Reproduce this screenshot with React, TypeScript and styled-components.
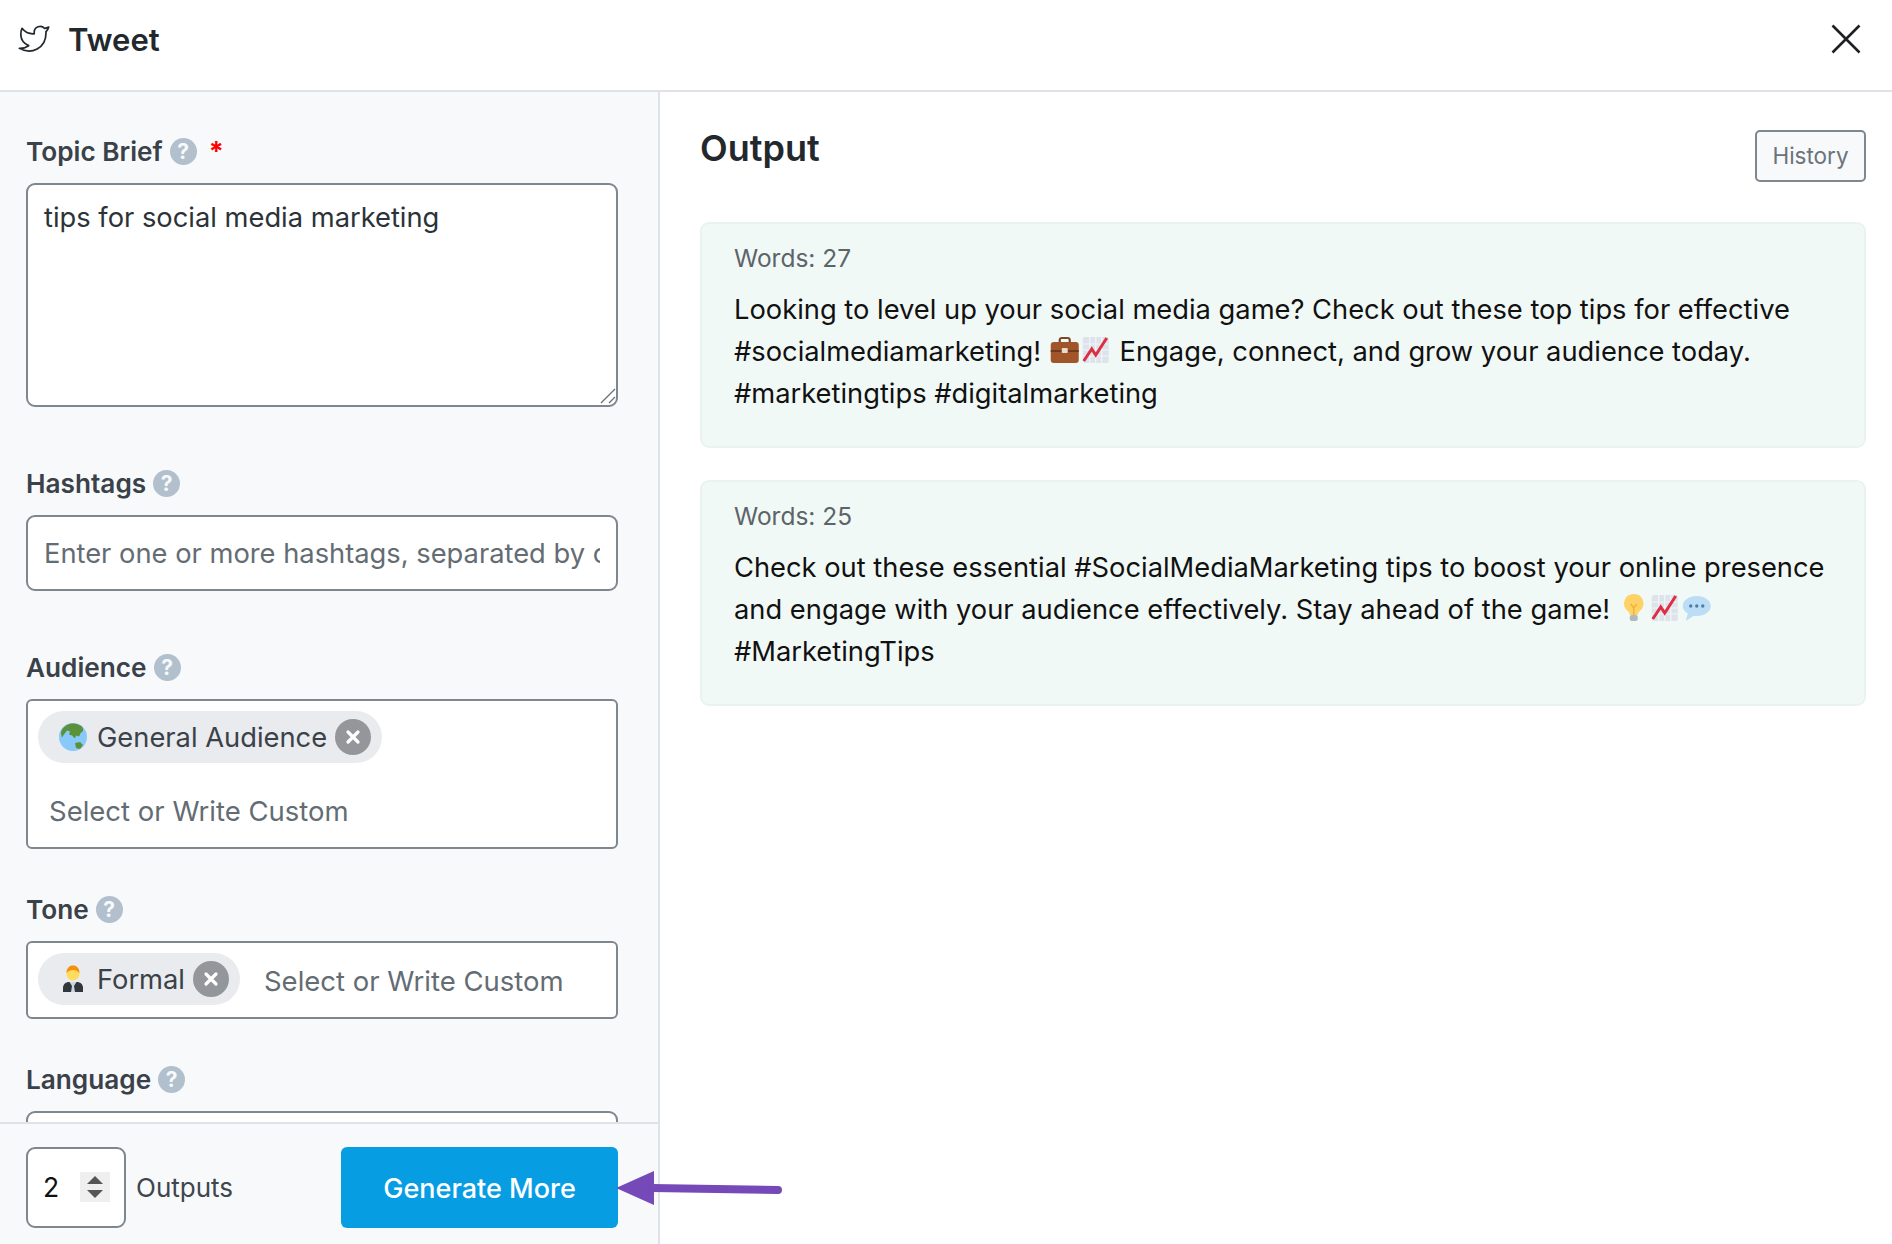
import React from 'react';
import styled, { createGlobalStyle } from 'styled-components';

const GlobalStyle = createGlobalStyle`
  html, body {
    margin: 0;
    padding: 0;
    background: #fff;
    font-family: 'Inter', 'Liberation Sans', sans-serif;
  }
  * {
    box-sizing: border-box;
  }
`;

const Page = styled.div`
  width: 1892px;
  height: 1244px;
  display: flex;
  flex-direction: column;
  overflow: hidden;
  position: relative;
  color: #23282d;
`;

const Header = styled.header`
  height: 92px;
  flex: none;
  display: flex;
  align-items: center;
  justify-content: space-between;
  padding: 0 30px 12px 18px;
  border-bottom: 2px solid #dfe3e8;
`;

const HeaderTitle = styled.div`
  display: flex;
  align-items: center;
  gap: 18px;
`;

const Heading = styled.h1`
  margin: 0;
  font-size: 31px;
  font-weight: 600;
  color: #23282d;
`;

const CloseIcon = styled.svg`
  width: 32px;
  height: 32px;
  display: block;
`;

const Body = styled.div`
  flex: 1;
  display: flex;
  min-height: 0;
`;

const Sidebar = styled.aside`
  width: 660px;
  flex: none;
  display: flex;
  flex-direction: column;
  background: #f7f9fb;
  border-right: 2px solid #dfe3e8;
`;

const Form = styled.div`
  flex: 1;
  min-height: 0;
  overflow: hidden;
  padding: 43px 40px 0 26px;
  display: flex;
  flex-direction: column;
`;

const Field = styled.div<{ $gap: number }>`
  flex: none;
  margin-bottom: ${(p) => p.$gap}px;
`;

const Label = styled.label`
  display: flex;
  align-items: center;
  height: 32px;
  margin-bottom: 16px;
  font-size: 26.2px;
  font-weight: 600;
  color: #3a4149;
  gap: 7px;
`;

const HelpBadge = styled.span`
  width: 27px;
  height: 27px;
  border-radius: 50%;
  background: #b2bfcc;
  color: #f7f9fb;
  font-size: 21px;
  font-weight: 700;
  display: inline-flex;
  align-items: center;
  justify-content: center;
`;

const Required = styled.span`
  color: #f00;
  font-size: 27px;
  font-weight: 700;
  margin-left: 5px;
`;

const TopicWrap = styled.div`
  position: relative;
  width: 592px;
  height: 224px;
`;

const TopicArea = styled.textarea`
  display: block;
  width: 100%;
  height: 100%;
  padding: 15px 16px;
  border: 2px solid #7e868e;
  border-radius: 9px;
  background: #fff;
  font: 400 27.3px/1.3 'Inter', 'Liberation Sans', sans-serif;
  color: #2c3338;
  outline: none;
  resize: none;
`;

const ResizeGrip = styled.svg`
  position: absolute;
  right: 2px;
  bottom: 3px;
  width: 16px;
  height: 16px;
`;

const HashtagInput = styled.input`
  display: block;
  width: 592px;
  height: 76px;
  padding: 0 16px;
  border: 2px solid #7e868e;
  border-radius: 9px;
  background: #fff;
  font: 400 27.3px 'Inter', 'Liberation Sans', sans-serif;
  color: #2c3338;
  outline: none;

  &::placeholder {
    color: #646c73;
    opacity: 1;
  }
`;

const TagBox = styled.div<{ $wrap?: boolean; $height: number }>`
  width: 592px;
  height: ${(p) => p.$height}px;
  padding: 10px 10px;
  border: 2px solid #7e868e;
  border-radius: 6px;
  background: #fff;
  display: flex;
  flex-wrap: ${(p) => (p.$wrap ? 'wrap' : 'nowrap')};
  align-items: flex-start;
`;

const Tag = styled.div`
  height: 52px;
  flex: none;
  display: flex;
  align-items: center;
  background: #e9ebee;
  border-radius: 26px;
  padding: 0 11px 0 21px;
  font-size: 27.3px;
  color: #3a4149;
`;

const TagEmoji = styled.svg`
  width: 28px;
  height: 28px;
  margin-right: 10px;
  flex: none;
`;

const TagRemove = styled.span`
  width: 36px;
  height: 36px;
  margin-left: 8px;
  border-radius: 50%;
  background: #93979b;
  display: flex;
  align-items: center;
  justify-content: center;
`;

const RemoveIcon = styled.svg`
  width: 16px;
  height: 16px;
`;

const Placeholder = styled.div<{ $block?: boolean }>`
  font-size: 27.5px;
  line-height: 34px;
  color: #646c73;
  ${(p) => (p.$block ? 'flex-basis: 100%; padding: 22px 0 0 11px;' : 'padding: 11px 0 0 24px;')}
`;

const ClippedBox = styled.div`
  width: 592px;
  height: 60px;
  margin-top: 1px;
  border: 2px solid #7e868e;
  border-radius: 9px;
  background: #fff;
`;

const Footer = styled.footer`
  height: 122px;
  flex: none;
  display: flex;
  align-items: center;
  padding: 6px 40px 0 26px;
  border-top: 2px solid #dfe3e8;
  background: #f7f9fb;
`;

const NumberBox = styled.div`
  width: 100px;
  height: 81px;
  display: flex;
  align-items: center;
  justify-content: space-between;
  padding: 0 14px 0 15px;
  border: 2px solid #7e868e;
  border-radius: 9px;
  background: #fff;
  font-size: 26.5px;
  color: #111;
`;

const Spinner = styled.svg`
  width: 30px;
  height: 30px;
  background: #efefef;
`;

const OutputsLabel = styled.span`
  margin-left: 10px;
  font-size: 26px;
  color: #3f464d;
`;

const GenerateButton = styled.button`
  margin-left: auto;
  width: 277px;
  height: 81px;
  padding: 2px 0 0;
  border: none;
  border-radius: 6px;
  background: #069de3;
  color: #fff;
  font: 500 27px 'Inter', 'Liberation Sans', sans-serif;
`;

const OutputPanel = styled.main`
  flex: 1;
  min-width: 0;
  padding: 36px 26px 0 40px;
  background: #fff;
`;

const OutputHeader = styled.div`
  display: flex;
  justify-content: space-between;
  align-items: flex-start;
  height: 94px;
`;

const OutputTitle = styled.h2`
  margin: 0;
  font-size: 36px;
  line-height: 40px;
  font-weight: 600;
  color: #23282d;
`;

const HistoryButton = styled.button`
  width: 111px;
  height: 52px;
  margin-top: 2px;
  padding: 0 0 2px;
  border: 2px solid #7e868e;
  border-radius: 5px;
  background: #f7f9fb;
  color: #6c737a;
  font: 400 22.5px 'Inter', 'Liberation Sans', sans-serif;
`;

const Card = styled.article`
  height: 226px;
  margin-bottom: 32px;
  padding: 19px 32px 0 32px;
  background: #f1f9f7;
  border: 2px solid #e9f4f1;
  border-radius: 9px;
`;

const WordCount = styled.div`
  font-size: 24.5px;
  line-height: 30px;
  color: #5c6469;
  margin-bottom: 15px;
`;

const CardText = styled.p`
  margin: 0;
  padding-top: 1px;
  font-size: 27.3px;
  line-height: 42px;
  color: #111;
`;

const InlineEmoji = styled.svg`
  display: inline-block;
  width: 31.5px;
  height: 30px;
  vertical-align: -4px;
`;

const ArrowOverlay = styled.svg`
  position: absolute;
  left: 614px;
  top: 1168px;
  width: 170px;
  height: 40px;
`;

const HelpIcon: React.FC = () => <HelpBadge>?</HelpBadge>;

const Briefcase: React.FC = () => (
  <InlineEmoji viewBox="0 0 30 30">
    <path d="M10 7V4.500A2 2 0 0 1 12 3h6a2 2 0 0 1 2 1.500V7" fill="none" stroke="#7b4a24" strokeWidth="2.200" />
    <rect x="1" y="7" width="28" height="21" rx="3" fill="#a0562a" />
    <rect x="1" y="15" width="28" height="2" fill="#6f3b1c" />
    <rect x="12" y="13" width="6" height="5" rx="1" fill="#e8dcc8" />
  </InlineEmoji>
);

const Chart: React.FC = () => (
  <InlineEmoji viewBox="0 0 30 30">
    <rect x="2" y="2" width="26" height="26" rx="2" fill="#dde3ea" />
    <path d="M2 9h26M2 15h26M2 21h26M9 2v26M15 2v26M21 2v26" stroke="#f3f5f8" strokeWidth="1.200" />
    <path d="M3 26 L11 14 L15 20 L26 3" fill="none" stroke="#dd2e44" strokeWidth="3" />
  </InlineEmoji>
);

const Bulb: React.FC = () => (
  <InlineEmoji viewBox="0 0 30 30">
    <path d="M15 1a9.500 9.500 0 0 0-6 17c1.200 1 2 2 2 4h8c0-2 .8-3 2-4a9.500 9.500 0 0 0-6-17z" fill="#ffd265" />
    <path d="M12 11l3 4 3-4M15 15v7" fill="none" stroke="#f2b13d" strokeWidth="1.400" />
    <rect x="11" y="22" width="8" height="6" rx="2" fill="#b0b8c2" />
  </InlineEmoji>
);

const Bubble: React.FC = () => (
  <InlineEmoji viewBox="0 0 30 30">
    <path d="M15 3C7 3 1 7.500 1 13c0 3 2 5.700 5 7.500L4 28l8-5.200c1 .2 2 .2 3 .2 8 0 14-4.500 14-10S23 3 15 3z" fill="#bbddf5" />
    <circle cx="9" cy="13" r="1.700" fill="#4f7da8" />
    <circle cx="15" cy="13" r="1.700" fill="#4f7da8" />
    <circle cx="21" cy="13" r="1.700" fill="#4f7da8" />
  </InlineEmoji>
);

const RemoveTag: React.FC = () => (
  <TagRemove>
    <RemoveIcon viewBox="0 0 16 16">
      <path d="M3 3l10 10M13 3L3 13" stroke="#fff" strokeWidth="3.200" strokeLinecap="round" />
    </RemoveIcon>
  </TagRemove>
);

const App: React.FC = () => {
  return (
    <Page>
      <GlobalStyle />
      <Header>
        <HeaderTitle>
          <svg width="32" height="32" viewBox="0 0 24 24" fill="none" stroke="#23282d" strokeWidth="1.300" strokeLinejoin="round">
            <path d="M23 3a10.900 10.900 0 0 1-3 1.100 4.480 4.480 0 0 0-7.860 3v1A10.660 10.660 0 0 1 3 4s-4 9 5 13a11.640 11.640 0 0 1-7 2c9 5 20 0 20-11.500a4.500 4.500 0 0 0-.08-.83A7.720 7.720 0 0 0 23 3z" />
          </svg>
          <Heading>Tweet</Heading>
        </HeaderTitle>
        <CloseIcon viewBox="0 0 32 32">
          <path d="M2.500 2.500l27 27M29.500 2.500l-27 27" stroke="#1d2124" strokeWidth="2.600" />
        </CloseIcon>
      </Header>
      <Body>
        <Sidebar>
          <Form>
            <Field $gap={60}>
              <Label>
                Topic Brief <HelpIcon /> <Required>*</Required>
              </Label>
              <TopicWrap>
                <TopicArea defaultValue="tips for social media marketing" />
                <ResizeGrip viewBox="0 0 16 16">
                  <path d="M1 15L15 1M9 15l6-6" stroke="#6b7278" strokeWidth="1.400" fill="none" />
                </ResizeGrip>
              </TopicWrap>
            </Field>
            <Field $gap={60}>
              <Label>
                Hashtags <HelpIcon />
              </Label>
              <HashtagInput placeholder="Enter one or more hashtags, separated by comma" />
            </Field>
            <Field $gap={44}>
              <Label>
                Audience <HelpIcon />
              </Label>
              <TagBox $wrap $height={150}>
                <Tag>
                  <TagEmoji viewBox="0 0 28 28">
                    <circle cx="14" cy="14" r="14" fill="#88c9f9" />
                    <path d="M9 1.500c3-1.500 9-2 14 2 2 3 1 6-1 6l-2 4-3-1-1 3-3-3-3-1 1-3-3-1-3 4-2 3-1-4c0-4 3-7 7-9zM16 20l5-1 3 3-3 4-4-1z" fill="#5c913b" />
                  </TagEmoji>
                  General Audience
                  <RemoveTag />
                </Tag>
                <Placeholder $block>Select or Write Custom</Placeholder>
              </TagBox>
            </Field>
            <Field $gap={44}>
              <Label>
                Tone <HelpIcon />
              </Label>
              <TagBox $height={78}>
                <Tag>
                  <TagEmoji viewBox="0 0 28 28">
                    <circle cx="14" cy="9" r="6.500" fill="#ffdc5d" />
                    <path d="M7.500 8c0-5 3-7.500 6.500-7.500S20.500 3 20.500 8c-2-2-4-3-6.500-3S9.500 6 7.500 8z" fill="#f4900c" />
                    <path d="M4 27v-4c0-4 3-6 6-6h8c3 0 6 2 6 6v4z" fill="#31373d" />
                    <path d="M10.500 17h7L15 21l1 6h-4l1-6z" fill="#ccd6dd" />
                  </TagEmoji>
                  Formal
                  <RemoveTag />
                </Tag>
                <Placeholder>Select or Write Custom</Placeholder>
              </TagBox>
            </Field>
            <Field $gap={0}>
              <Label>
                Language <HelpIcon />
              </Label>
              <ClippedBox />
            </Field>
          </Form>
          <Footer>
            <NumberBox>
              2
              <Spinner viewBox="0 0 30 30">
                <path d="M15 4l8 8H7zM15 26l8-8H7z" fill="#555" />
              </Spinner>
            </NumberBox>
            <OutputsLabel>Outputs</OutputsLabel>
            <GenerateButton>Generate More</GenerateButton>
          </Footer>
        </Sidebar>
        <OutputPanel>
          <OutputHeader>
            <OutputTitle>Output</OutputTitle>
            <HistoryButton>History</HistoryButton>
          </OutputHeader>
          <Card>
            <WordCount>Words: 27</WordCount>
            <CardText>
              Looking to level up your social media game? Check out these top tips for effective
              #socialmediamarketing! <Briefcase />
              <Chart /> Engage, connect, and grow your audience today. #marketingtips #digitalmarketing
            </CardText>
          </Card>
          <Card>
            <WordCount>Words: 25</WordCount>
            <CardText>
              Check out these essential #SocialMediaMarketing tips to boost your online presence and
              engage with your audience effectively. Stay ahead of the game! <Bulb />
              <Chart />
              <Bubble /> #MarketingTips
            </CardText>
          </Card>
        </OutputPanel>
      </Body>
      <ArrowOverlay viewBox="0 0 170 40">
        <path d="M2 20 L40 3 L40 37 Z" fill="#7649b8" />
        <path d="M38 20 L164 22" stroke="#7649b8" strokeWidth="8" strokeLinecap="round" />
      </ArrowOverlay>
    </Page>
  );
};

export default App;
